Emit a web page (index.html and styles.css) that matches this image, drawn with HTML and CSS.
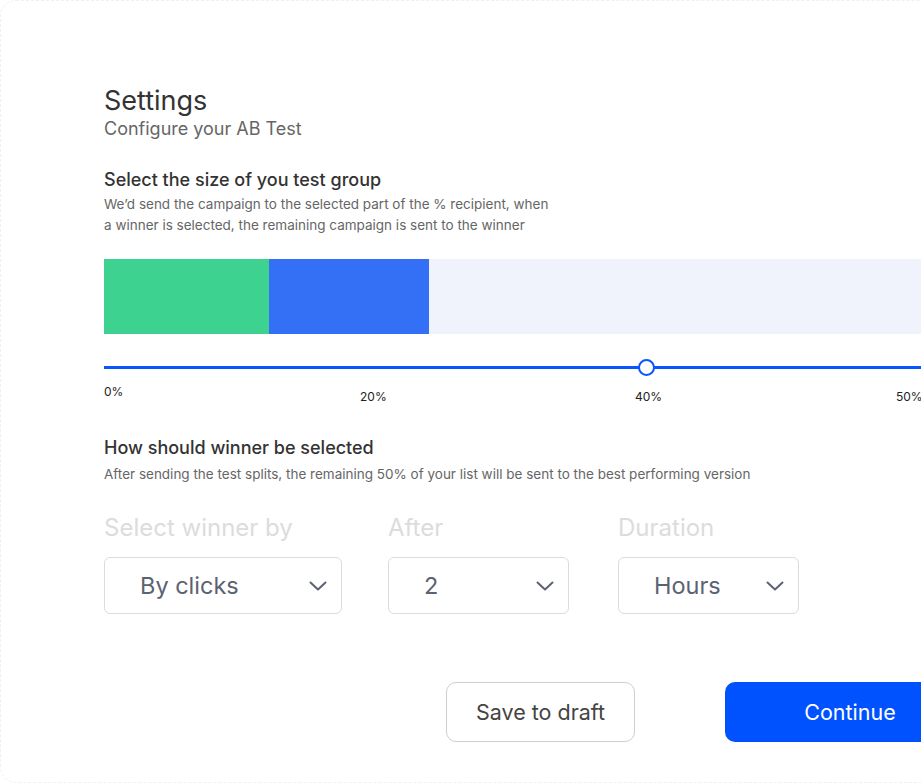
FILE: index.html
```html
<!DOCTYPE html>
<html lang="en">
<head>
  <meta charset="UTF-8">
  <title>AB Test Settings</title>
  <link rel="stylesheet" href="styles.css">
</head>
<body>
  <div class="card">
    <h1 class="title">Settings</h1>
    <p class="subtitle">Configure your AB Test</p>

    <h2 class="section-title first">Select the size of you test group</h2>
    <p class="section-desc">We’d send the campaign to the selected part of the % recipient, when<br>a winner is selected, the remaining campaign is sent to the winner</p>

    <div class="split-bar">
      <div class="split split-a"></div>
      <div class="split split-b"></div>
    </div>

    <div class="slider">
      <div class="track"></div>
      <div class="knob" style="left: 542px"></div>
    </div>
    <div class="scale">
      <span class="tick tick-zero" style="left: 0px">0%</span>
      <span class="tick" style="left: 256px">20%</span>
      <span class="tick" style="left: 531px">40%</span>
      <span class="tick" style="left: 792px">50%</span>
    </div>

    <h2 class="section-title second">How should winner be selected</h2>
    <p class="section-desc">After sending the test splits, the remaining 50% of your list will be sent to the best performing version</p>

    <div class="fields">
      <div class="field field-winner">
        <label>Select winner by</label>
        <div class="select">
          <span>By clicks</span>
          <svg width="18" height="10" viewBox="0 0 18 10"><path d="M1.5 1.5 L9 8.5 L16.5 1.5" fill="none" stroke="#5b6272" stroke-width="2" stroke-linecap="round" stroke-linejoin="round"/></svg>
        </div>
      </div>
      <div class="field field-after">
        <label>After</label>
        <div class="select">
          <span>2</span>
          <svg width="18" height="10" viewBox="0 0 18 10"><path d="M1.5 1.5 L9 8.5 L16.5 1.5" fill="none" stroke="#5b6272" stroke-width="2" stroke-linecap="round" stroke-linejoin="round"/></svg>
        </div>
      </div>
      <div class="field field-duration">
        <label>Duration</label>
        <div class="select">
          <span>Hours</span>
          <svg width="18" height="10" viewBox="0 0 18 10"><path d="M1.5 1.5 L9 8.5 L16.5 1.5" fill="none" stroke="#5b6272" stroke-width="2" stroke-linecap="round" stroke-linejoin="round"/></svg>
        </div>
      </div>
    </div>

    <div class="actions">
      <button class="btn btn-draft">Save to draft</button>
      <button class="btn btn-continue">Continue</button>
    </div>
  </div>
</body>
</html>
```

FILE: styles.css
```css
body {
  margin: 0;
  font-family: Inter, "Noto Sans", sans-serif;
  background: #fff;
  overflow: hidden;
}
.card {
  width: 1100px;
  height: 783px;
  box-sizing: border-box;
  border: 1px dashed #f0f0f0;
  border-radius: 16px;
  padding-left: 103px;
}
.title {
  margin: 84px 0 0;
  font-size: 27px;
  line-height: 32px;
  font-weight: 400;
  color: #333;
}
.subtitle {
  margin: 1px 0 0;
  font-size: 18px;
  line-height: 22px;
  color: #666;
}
.section-title {
  margin: 0;
  font-size: 18px;
  line-height: 22px;
  font-weight: 500;
  color: #333;
}
.section-title.first {
  margin-top: 29px;
}
.section-title.second {
  margin-top: 25px;
}
.section-desc {
  margin: 3px 0 0;
  font-size: 13.5px;
  line-height: 21px;
  color: #666;
}
.section-title.second + .section-desc {
  margin-top: 5px;
}
.split-bar {
  display: flex;
  margin-top: 23px;
  width: 900px;
  height: 75px;
  background: #f0f3fc;
}
.split-a {
  width: 165px;
  background: #3dd28f;
}
.split-b {
  width: 160px;
  background: #3370f5;
}
.slider {
  position: relative;
  height: 8px;
  margin-top: 30px;
  width: 900px;
}
.track {
  position: absolute;
  left: 0;
  right: 0;
  top: 2px;
  height: 3px;
  background: #0a55ff;
}
.knob {
  position: absolute;
  top: -5px;
  width: 13px;
  height: 13px;
  margin-left: -8px;
  border: 2px solid #0a55ff;
  border-radius: 50%;
  background: #fff;
}
.scale {
  position: relative;
  height: 40px;
  font-size: 12px;
  color: #222;
}
.tick {
  position: absolute;
  top: 17px;
}
.tick-zero {
  top: 12px;
}
.fields {
  display: flex;
  margin-top: 28px;
}
.field {
  display: flex;
  flex-direction: column;
}
.field label {
  font-size: 24px;
  line-height: 30px;
  color: #dcdcdc;
}
.field-winner { width: 284px; }
.field-after { width: 230px; }
.field-duration { width: 180px; }
.select {
  display: flex;
  align-items: center;
  justify-content: space-between;
  box-sizing: border-box;
  height: 57px;
  margin-top: 14px;
  padding: 0 14px 0 35px;
  border: 1px solid #dcdcdc;
  border-radius: 6px;
  font-size: 23.5px;
  color: #5b6272;
}
.field-winner .select { width: 238px; }
.field-after .select { width: 181px; }
.field-duration .select { width: 181px; }
.actions {
  display: flex;
  gap: 90px;
  margin-top: 68px;
  margin-left: 342px;
}
.btn {
  height: 60px;
  border-radius: 10px;
  font-family: Inter, "Noto Sans", sans-serif;
  font-size: 21.5px;
  cursor: pointer;
}
.btn-draft {
  width: 189px;
  background: #fff;
  border: 1px solid #cfcfcf;
  color: #444;
}
.btn-continue {
  width: 250px;
  background: #0052ff;
  border: none;
  color: #fff;
}
```
